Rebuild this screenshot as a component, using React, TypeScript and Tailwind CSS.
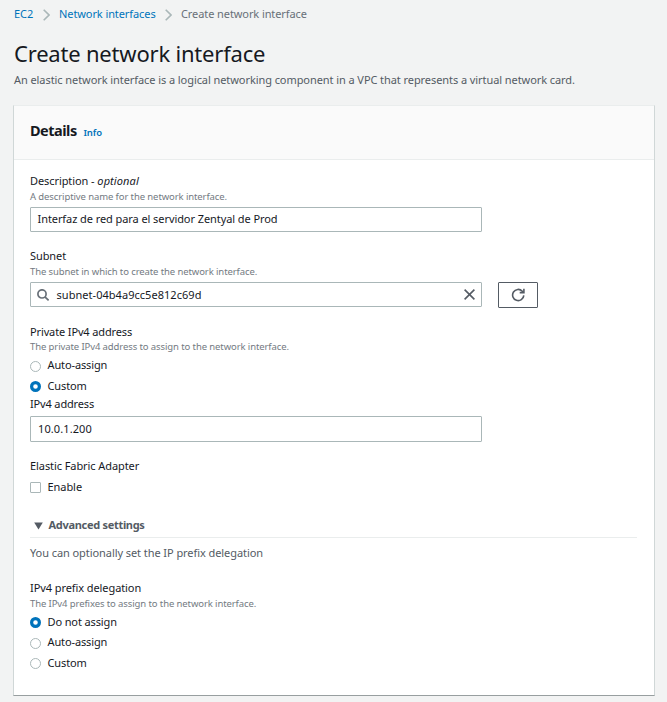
import type { ReactNode } from "react";

function Chevron() {
  return (
    <svg className="mt-px h-3 w-[7px]" viewBox="0 0 7 12" fill="none" stroke="#aab7b8" strokeWidth="1.6">
      <path d="M0.7 0.7 L6 6 L0.7 11.3" />
    </svg>
  );
}

function Label({ className = "", children }: { className?: string; children: ReactNode }) {
  return <div className={`h-4 leading-4 whitespace-pre ${className}`}>{children}</div>;
}

function Hint({ className = "", children }: { className?: string; children: ReactNode }) {
  return (
    <div className={`h-3.5 text-[9.5px] leading-[14px] tracking-[-0.1px] whitespace-pre text-[#737a82] ${className}`}>
      {children}
    </div>
  );
}

function Radio({
  checked = false,
  className = "",
  textClassName = "leading-4",
  children,
}: {
  checked?: boolean;
  className?: string;
  textClassName?: string;
  children: ReactNode;
}) {
  return (
    <div className={`flex h-[17px] items-end gap-[6.5px] ${className}`}>
      <svg className="mb-[2px] size-[11px] shrink-0" viewBox="0 0 11 11">
        {checked ? (
          <circle cx="5.5" cy="5.5" r="3.9" fill="#fff" stroke="#0073bb" strokeWidth="3.2" />
        ) : (
          <circle cx="5.5" cy="5.5" r="5" fill="#fff" stroke="#aab7b8" />
        )}
      </svg>
      <span className={`h-[17px] tracking-[-0.12px] ${textClassName}`}>{children}</span>
    </div>
  );
}

export default function App() {
  return (
    <div className="h-[702px] w-[667px] overflow-hidden bg-[#f2f3f3] pl-[13px] font-['Noto_Sans','Open_Sans',sans-serif] text-[11px] text-[#16191f]">
      <nav className="flex h-7 items-center pl-px tracking-[-0.09px] text-[#0073bb]">
        <span className="w-[29px]">EC2</span>
        <Chevron />
        <span className="ml-[9px] w-[106px] whitespace-nowrap">Network interfaces</span>
        <Chevron />
        <span className="ml-[9px] whitespace-nowrap text-[#687078]">Create network interface</span>
      </nav>
      <h1 className="mt-[7px] h-9 pl-px text-[22px] leading-9 tracking-[-0.2px]">Create network interface</h1>
      <p className="mt-px h-4 pl-px leading-4 tracking-[-0.073px] whitespace-nowrap text-[#545b64]">
        An elastic network interface is a logical networking component in a VPC that represents a virtual network card.
      </p>

      <section className="mt-[17px] h-[591px] w-[642px] border border-[#d0d7d7] border-t-[#eaeded] border-b-[#989fa0] bg-white">
        <header className="flex h-[54px] items-baseline border-b border-[#eaeded] bg-[#fafafa] pt-[14px] pl-4">
          <h2 className="w-[53.5px] text-[14.5px] leading-[21px] font-bold tracking-[-0.5px]">Details</h2>
          <a className="text-[9.5px] font-semibold tracking-[-0.15px] text-[#0073bb]">Info</a>
        </header>

        <div className="pt-[13px] pr-[17px] pl-4">
          <Label className="tracking-[-0.08px]">
            Description - <i className="tracking-[0.1px]">optional</i>
          </Label>
          <Hint className="mt-px">A descriptive name for the network interface.</Hint>
          <div className="mt-[3px] h-[25px] w-[452px] rounded-[1px] border border-[#aab7b8] pl-[6.5px] leading-[22px] tracking-[-0.075px]">
            Interfaz de red para el servidor Zentyal de Prod
          </div>

          <Label className="mt-4 tracking-[-0.08px]">Subnet</Label>
          <Hint className="mt-px">The subnet in which to create the network interface.</Hint>
          <div className="mt-[3px] flex h-[26px] items-start gap-4">
            <div className="flex h-[25px] w-[452px] items-center rounded-[1px] border border-[#aab7b8] pr-[6px] pl-[6px]">
              <svg className="size-3" viewBox="0 0 12 12" fill="none" stroke="#687078" strokeWidth="1.7">
                <circle cx="5" cy="4.9" r="4.1" />
                <path d="M7.9 7.8 L11.6 11.3" />
              </svg>
              <span className="ml-[7.5px] flex-1 pt-[2px] tracking-[0.04px]">subnet-04b4a9cc5e812c69d</span>
              <svg className="size-[11px]" viewBox="0 0 11 11" fill="none" stroke="#545b64" strokeWidth="1.6">
                <path d="M0.6 0.6 L10.4 10.4 M10.4 0.6 L0.6 10.4" />
              </svg>
            </div>
            <button className="flex h-[26px] w-10 items-center justify-center rounded-[1px] border border-[#545b64]">
              <svg className="-mt-px size-[14px]" viewBox="0 0 14 14" fill="none" stroke="#545b64" strokeWidth="1.6">
                <path d="M12.8 7.4 A5.6 5.6 0 1 1 11.3 3.2 L12.2 4.2" />
                <path d="M12.9 0.8 V4.6 H8.7" />
              </svg>
            </button>
          </div>

          <Label className="mt-4 tracking-[-0.13px]">Private IPv4 address</Label>
          <Hint>The private IPv4 address to assign to the network interface.</Hint>
          <Radio className="mt-[3px]">Auto-assign</Radio>
          <Radio className="mt-[3px]" textClassName="leading-[18px]" checked>Custom</Radio>
          <Label className="mt-[2px] tracking-[-0.15px]">IPv4 address</Label>
          <div className="mt-1 h-[26px] w-[452px] rounded-[1px] border border-[#aab7b8] pl-[7px] leading-6 tracking-[0.1px]">
            10.0.1.200
          </div>

          <Label className="mt-4 tracking-[-0.08px]">Elastic Fabric Adapter</Label>
          <div className="mt-[5px] flex h-4 items-center gap-[6.5px]">
            <span className="mt-px size-[11px] rounded-[1px] border border-[#aab7b8]" />
            <span className="leading-4 tracking-[-0.06px]">Enable</span>
          </div>

          <div className="mt-[22px] flex h-[21px] items-start border-b border-[#eaeded] pl-1 font-bold text-[#545b64]">
            <svg className="mt-[5px] h-2 w-[9px]" viewBox="0 0 9 8" fill="#545b64">
              <path d="M0.2 0.4 H8.8 L4.5 7.6 Z" />
            </svg>
            <span className="ml-[5.5px] leading-4 tracking-[-0.3px]">Advanced settings</span>
          </div>
          <p className="mt-[7px] h-4 leading-4 tracking-[-0.07px] text-[#545b64]">
            You can optionally set the IP prefix delegation
          </p>

          <Label className="mt-[19px] tracking-[-0.08px]">IPv4 prefix delegation</Label>
          <Hint className="mt-px">The IPv4 prefixes to assign to the network interface.</Hint>
          <Radio className="mt-[2px]" textClassName="leading-[18px]" checked>Do not assign</Radio>
          <Radio className="mt-1">Auto-assign</Radio>
          <Radio className="mt-[3px]" textClassName="leading-[18px]">Custom</Radio>
        </div>
      </section>
    </div>
  );
}
